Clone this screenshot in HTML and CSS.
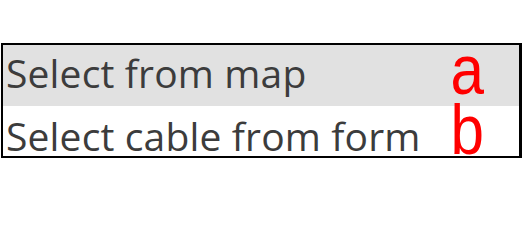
FILE: index.html
```html
<!DOCTYPE html>
<html>
<head>
<meta charset="utf-8">
<link rel="stylesheet" href="styles.css">
</head>
<body>
<div class="list">
  <div class="row row-selected">
    <span class="label">Select from map</span>
    <span class="marker">a</span>
  </div>
  <div class="row row-plain">
    <span class="label">Select cable from form</span>
    <span class="marker">b</span>
  </div>
</div>
</body>
</html>
```
FILE: styles.css
```css
html, body {
  margin: 0;
  padding: 0;
  background: #ffffff;
}
.list {
  margin: 43px 0 0 1px;
  width: 521px;
  box-sizing: border-box;
  border: 2px solid #000000;
  border-right-width: 3px;
}
.row {
  display: flex;
  align-items: flex-start;
  box-sizing: border-box;
  padding-left: 3px;
}
.row-selected {
  height: 61px;
  background: #e1e1e1;
  padding-top: 8px;
}
.row-plain {
  height: 50px;
  background: #ffffff;
  padding-top: 10px;
}
.label {
  font-family: "Open Sans", sans-serif;
  font-size: 39px;
  line-height: 39px;
  letter-spacing: 0.15px;
  color: #3c3c3c;
  white-space: nowrap;
}
.marker {
  margin-left: auto;
  margin-right: 35px;
  font-family: "Liberation Sans", Arial, sans-serif;
  font-size: 70px;
  line-height: 50px;
  height: 50px;
  color: #ff0000;
  display: inline-block;
  transform: scaleX(0.86);
  transform-origin: right top;
}
.row-selected .marker {
  margin-top: -8px;
}
.row-plain .marker {
  margin-top: -11px;
}
```
